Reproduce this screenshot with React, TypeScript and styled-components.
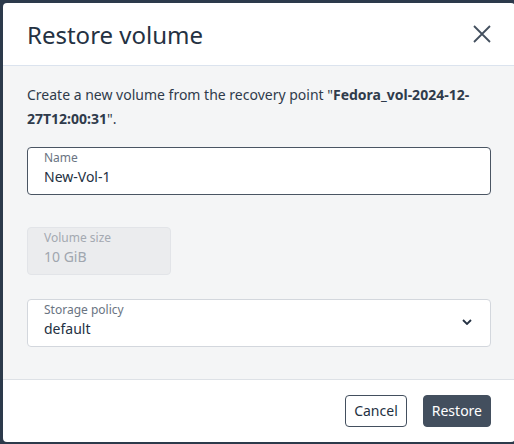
import React from 'react';
import styled, { createGlobalStyle } from 'styled-components';

const GlobalStyle = createGlobalStyle`
  html, body {
    margin: 0;
    padding: 0;
    background: #2c3a4b;
  }
  body {
    font-family: "Noto Sans", "Open Sans", sans-serif;
    color: #243142;
  }
`;

const Backdrop = styled.div`
  width: 514px;
  height: 444px;
  padding: 3px 0 0 3px;
  box-sizing: border-box;
  overflow: hidden;
  background: #2c3a4b;
`;

const Dialog = styled.div`
  width: 512px;
  height: 439px;
  display: flex;
  flex-direction: column;
  background: #fff;
  border-radius: 4px;
  overflow: hidden;
`;

const Header = styled.div`
  height: 63px;
  flex: none;
  display: flex;
  align-items: center;
  justify-content: space-between;
  padding: 0 24px;
  box-sizing: border-box;
  border-bottom: 1px solid #dbe3ee;
`;

const Title = styled.h1`
  margin: 0;
  font-size: 24px;
  font-weight: 400;
  color: #243142;
`;

const CloseButton = styled.button`
  width: 18px;
  height: 18px;
  padding: 0;
  border: none;
  background: none;
  display: flex;
  align-items: center;
  justify-content: center;
  color: #434f5e;
  cursor: pointer;
`;

const Body = styled.div`
  flex: none;
  background: #f4f5f6;
  padding: 17px 24px 32px;
  display: flex;
  flex-direction: column;
`;

const Intro = styled.p`
  margin: 0 0 16px;
  font-size: 14px;
  line-height: 24px;
  color: #2f3b4b;

  b {
    font-weight: 700;
  }
`;

const Field = styled.div<{ $width?: string; $disabled?: boolean; $active?: boolean }>`
  position: relative;
  width: ${(p) => p.$width ?? '100%'};
  height: 48px;
  box-sizing: border-box;
  padding: 1px 16px 0;
  border-radius: 4px;
  border: 1px solid ${(p) => (p.$active ? '#4a5563' : p.$disabled ? '#e2e4e8' : '#d3d7dd')};
  background: ${(p) => (p.$disabled ? '#ebecee' : '#fff')};
  margin-bottom: ${(p) => (p.$active ? '32px' : '24px')};
  display: flex;
  flex-direction: column;

  &:last-child {
    margin-bottom: 0;
  }
`;

const Label = styled.span<{ $disabled?: boolean }>`
  font-size: 12px;
  line-height: 17px;
  color: ${(p) => (p.$disabled ? '#a4a9b1' : '#6a7482')};
`;

const Value = styled.span<{ $disabled?: boolean }>`
  font-size: 14px;
  line-height: 22px;
  color: ${(p) => (p.$disabled ? '#a0a6ae' : '#243142')};
`;

const Chevron = styled.span`
  position: absolute;
  right: 18px;
  top: 19px;
  display: flex;
  color: #243142;
`;

const Footer = styled.div`
  flex: 1;
  display: flex;
  align-items: center;
  justify-content: flex-end;
  gap: 16px;
  padding: 0 24px 1px;
  box-sizing: border-box;
  border-top: 1px solid #dde1e6;
`;

const Button = styled.button<{ $primary?: boolean }>`
  height: 32px;
  padding: 0 8px;
  border-radius: 4px;
  font-family: inherit;
  font-size: 14px;
  cursor: pointer;
  border: 1px solid #434f5e;
  background: ${(p) => (p.$primary ? '#434f5e' : '#fff')};
  color: ${(p) => (p.$primary ? '#fff' : '#243142')};
`;

const App: React.FC = () => {
  return (
    <>
      <GlobalStyle />
      <Backdrop>
        <Dialog>
          <Header>
            <Title>Restore volume</Title>
            <CloseButton aria-label="Close">
              <svg width="18" height="18" viewBox="0 0 18 18" fill="none" stroke="currentColor" strokeWidth="1.8">
                <path d="M1 1 L17 17 M17 1 L1 17" />
              </svg>
            </CloseButton>
          </Header>
          <Body>
            <Intro>
              Create a new volume from the recovery point "<b>Fedora_vol-2024-12-27T12:00:31</b>".
            </Intro>
            <Field $active>
              <Label>Name</Label>
              <Value>New-Vol-1</Value>
            </Field>
            <Field $width="144px" $disabled>
              <Label $disabled>Volume size</Label>
              <Value $disabled>10 GiB</Value>
            </Field>
            <Field>
              <Label>Storage policy</Label>
              <Value>default</Value>
              <Chevron>
                <svg width="10" height="6" viewBox="0 0 10 6" fill="none" stroke="currentColor" strokeWidth="1.8">
                  <path d="M1 1 L5 5 L9 1" />
                </svg>
              </Chevron>
            </Field>
          </Body>
          <Footer>
            <Button>Cancel</Button>
            <Button $primary>Restore</Button>
          </Footer>
        </Dialog>
      </Backdrop>
    </>
  );
};

export default App;
